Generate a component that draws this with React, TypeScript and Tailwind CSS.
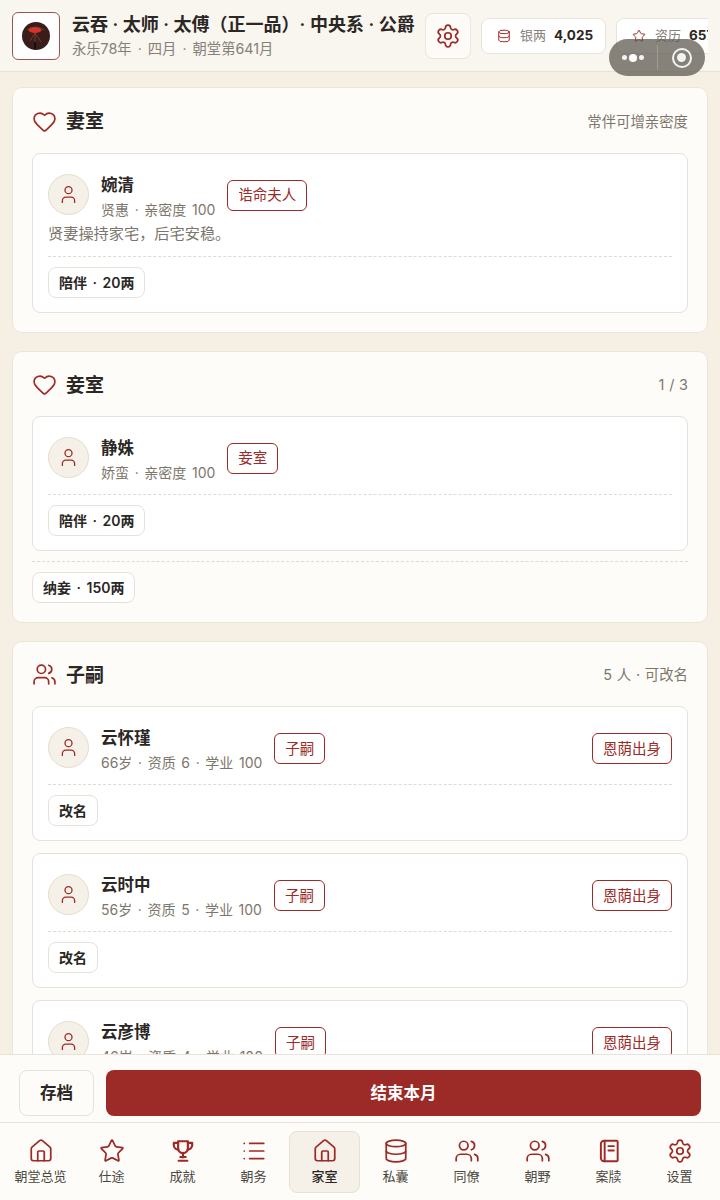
import { Database, Heart, House, List, Settings, Star, User, Users } from 'lucide-react'
import type { ReactNode } from 'react'

const RED = 'text-[#9c2a27]'

type IconProps = { className?: string; size?: number; strokeWidth?: number }

function CupIcon({ className, size = 24 }: IconProps) {
  return (
    <svg className={className} width={size} height={size} viewBox="0 0 24 24" fill="none" stroke="currentColor" strokeWidth="2" strokeLinecap="round" strokeLinejoin="round">
      <path d="M7.5 3h9v6.5a4.5 4.5 0 0 1-9 0z" />
      <path d="M7.5 4.5H3.5v2a4.2 4.2 0 0 0 4.2 4.2M16.5 4.5h4v2a4.2 4.2 0 0 1-4.2 4.2" />
      <path d="M12 14v4M9.5 17.5h5M8 21h8" />
    </svg>
  )
}

function LedgerIcon({ className, size = 24 }: IconProps) {
  return (
    <svg className={className} width={size} height={size} viewBox="0 0 24 24" fill="none" stroke="currentColor" strokeWidth="1.8" strokeLinecap="round" strokeLinejoin="round">
      <path d="M7.5 2.5H19a1 1 0 0 1 1 1v17a1 1 0 0 1-1 1H7.5a3 3 0 0 1-3-3v-13a3 3 0 0 1 3-3z" />
      <path d="M8 2.5v19M11.5 7.5h5M11.5 11.5h5" />
    </svg>
  )
}

const navItems = [
  { label: '朝堂总览', icon: House },
  { label: '仕途', icon: Star },
  { label: '成就', icon: CupIcon },
  { label: '朝务', icon: List },
  { label: '家室', icon: House, active: true },
  { label: '私囊', icon: Database },
  { label: '同僚', icon: Users },
  { label: '朝野', icon: Users },
  { label: '案牍', icon: LedgerIcon },
  { label: '设置', icon: Settings },
]

const children = [
  { name: '云怀瑾', meta: '66岁 · 资质 6 · 学业 100' },
  { name: '云时中', meta: '56岁 · 资质 5 · 学业 100' },
]

function Tag({ children }: { children: ReactNode }) {
  return (
    <span className="mt-[6px] flex h-[31px] shrink-0 items-center rounded-[6px] border border-[#9c2a27] bg-white px-[10px] text-[14.5px] text-[#9c2a27]">
      {children}
    </span>
  )
}

function SmallButton({ children }: { children: ReactNode }) {
  return (
    <button className="flex h-[31px] items-center rounded-[8px] border border-[#e6e2da] bg-white px-[10px] text-[14px] font-semibold text-[#2a2724] [word-spacing:2px]">
      {children}
    </button>
  )
}

function Avatar() {
  return (
    <div className="flex h-[41px] w-[41px] shrink-0 items-center justify-center rounded-full border border-[#e5dccd] bg-[#f6f1e8]">
      <User className={RED} size={21} strokeWidth={1.5} />
    </div>
  )
}

function SectionHeader({ icon, title, note }: { icon: ReactNode; title: string; note: string }) {
  return (
    <div className="mb-[16.2px] flex h-[30px] items-center">
      {icon}
      <h2 className="mt-px ml-[9px] flex-1 text-[19px] leading-none font-semibold text-[#2a2724]">{title}</h2>
      <span className="mt-px text-[14.4px] text-[#7d766c] [word-spacing:0.7px]">{note}</span>
    </div>
  )
}

function Person({ name, meta, tag, extra, desc }: { name: string; meta: string; tag: string; extra?: string; desc?: string }) {
  return (
    <div>
      <div className="flex items-start gap-3">
        <Avatar />
        <div className="flex flex-col">
          <span className="text-[16.5px] leading-[22px] font-semibold text-[#2a2724]">{name}</span>
          <span className="mt-[3px] text-[14px] leading-[22px] text-[#7d766c] [word-spacing:1.7px]">{meta}</span>
        </div>
        <Tag>{tag}</Tag>
        {extra && <div className="ml-auto"><Tag>{extra}</Tag></div>}
      </div>
      {desc && <p className="mt-px text-[15.2px] leading-[24px] text-[#7d766c]">{desc}</p>}
    </div>
  )
}

function PersonCard({ action, ...person }: { action?: string; name: string; meta: string; tag: string; extra?: string; desc?: string }) {
  return (
    <div className="rounded-[8px] border border-[#e6e2da] bg-white px-[15px] pt-[20px] pb-[14px]">
      <Person {...person} />
      {action && (
        <>
          <div className="mt-[10px] mb-[10px] border-t border-dashed border-[#e0dbd2]" />
          <SmallButton>{action}</SmallButton>
        </>
      )}
    </div>
  )
}

export default function App() {
  return (
    <div
      className="relative flex h-[1200px] w-[720px] flex-col overflow-hidden bg-[#f5efe4]"
      style={{ fontFamily: 'Inter, "Noto Sans CJK SC", sans-serif' }}
    >
      <header className="flex h-[72px] shrink-0 items-center border-b border-[#e8e1d5] bg-[#f9f5ef] px-[12px]">
        <div className="flex h-[48px] w-[48px] shrink-0 items-center justify-center rounded-[6px] border border-[#9c5350] bg-white">
          <svg width="30" height="30" viewBox="0 0 30 30">
            <circle cx="15" cy="15" r="14" fill="#3a1c1a" />
            <ellipse cx="14" cy="9" rx="6.5" ry="3" fill="#d8302c" />
            <path d="M6 9q8-6 17 0M14 12v15M9 20l5-8 6 9" stroke="#7b4a2a" strokeWidth="0.8" fill="none" />
            <rect x="13" y="21" width="2" height="7" fill="#111" />
          </svg>
        </div>
        <div className="ml-[12px] w-[344px] shrink-0 overflow-hidden">
          <div className="text-[18px] leading-[24px] font-semibold whitespace-nowrap text-[#2a2724] [text-spacing-trim:space-all]">云吞 · 太师 · 太傅（正一品）· 中央系 · 公爵</div>
          <div className="mt-[2px] text-[14.3px] leading-[20px] whitespace-nowrap text-[#85807a] [word-spacing:2px]">永乐78年 · 四月 · 朝堂第641月</div>
        </div>
        <button className="ml-[9px] flex h-[46px] w-[46px] shrink-0 items-center justify-center rounded-[8px] border border-[#ebe5da] bg-[#fdfbf7]">
          <Settings className={RED} size={26} strokeWidth={1.6} />
        </button>
        <div className="ml-[10px] flex min-w-0 flex-1 gap-[10px] overflow-hidden">
          <div className="flex h-[36px] w-[125px] shrink-0 items-center rounded-[8px] border border-[#e9e4db] bg-white pl-[15px]">
            <Database className={RED} size={14} strokeWidth={1.7} />
            <span className="ml-[9px] text-[13px] text-[#85807a]">银两</span>
            <span className="ml-[8px] text-[13.5px] font-bold text-[#2a2724]">4,025</span>
          </div>
          <div className="flex h-[36px] w-[125px] shrink-0 items-center rounded-[8px] border border-[#e9e4db] bg-white pl-[15px]">
            <Star className={RED} size={14} strokeWidth={1.7} />
            <span className="ml-[9px] text-[13px] text-[#85807a]">资历</span>
            <span className="ml-[8px] text-[13.5px] font-bold text-[#2a2724]">657</span>
          </div>
        </div>
      </header>

      <div className="absolute top-[39px] left-[609px] flex h-[37px] w-[96px] items-center rounded-full bg-[#5f5b52]/75">
        <div className="flex w-[48px] items-center justify-center gap-[2px]">
          <span className="h-[5px] w-[5px] rounded-full bg-white/90" />
          <span className="h-[8px] w-[8px] rounded-full bg-white" />
          <span className="h-[5px] w-[5px] rounded-full bg-white/90" />
        </div>
        <div className="h-[25px] w-px bg-white/20" />
        <div className="flex flex-1 items-center justify-center">
          <span className="flex h-[20px] w-[20px] items-center justify-center rounded-full border-2 border-white/90">
            <span className="h-[9px] w-[9px] rounded-full bg-white/90" />
          </span>
        </div>
      </div>

      <main className="flex min-h-0 flex-1 flex-col gap-[18px] overflow-hidden px-[12px] pt-[15.4px]">
        <section className="shrink-0 rounded-[10px] border border-[#ebe5da] bg-[#fefcf8] px-[19px] pt-[18px] pb-[19px]">
          <SectionHeader icon={<Heart className={RED} size={25} strokeWidth={1.6} />} title="妻室" note="常伴可增亲密度" />
          <PersonCard name="婉清" meta="贤惠 · 亲密度 100" tag="诰命夫人" desc="贤妻操持家宅，后宅安稳。" action="陪伴 · 20两" />
        </section>

        <section className="shrink-0 rounded-[10px] border border-[#ebe5da] bg-[#fefcf8] px-[19px] pt-[18px] pb-[19px]">
          <SectionHeader icon={<Heart className={RED} size={25} strokeWidth={1.6} />} title="妾室" note="1 / 3" />
          <PersonCard name="静姝" meta="娇蛮 · 亲密度 100" tag="妾室" action="陪伴 · 20两" />
          <div className="mt-[10px] mb-[10px] border-t border-dashed border-[#e0dbd2]" />
          <SmallButton>纳妾 · 150两</SmallButton>
        </section>

        <section className="shrink-0 rounded-[10px] border border-[#ebe5da] bg-[#fefcf8] px-[19px] pt-[18px]">
          <SectionHeader icon={<Users className={RED} size={25} strokeWidth={1.6} />} title="子嗣" note="5 人 · 可改名" />
          <div className="flex flex-col gap-[12px]">
            {children.map(c => (
              <PersonCard key={c.name} name={c.name} meta={c.meta} tag="子嗣" extra="恩荫出身" action="改名" />
            ))}
            <PersonCard name="云彦博" meta="46岁 · 资质 4 · 学业 100" tag="子嗣" extra="恩荫出身" />
          </div>
        </section>
      </main>

      <div className="flex h-[69px] shrink-0 items-start gap-[12px] border-t border-b border-[#e8e4dc] bg-[#fefcf8] px-[19px] pt-[15px]">
        <button className="flex h-[46px] w-[75px] shrink-0 items-center justify-center rounded-[8px] border border-[#e6e2da] bg-[#fefcf8] text-[16.5px] font-semibold text-[#2a2724]">存档</button>
        <button className="flex h-[46px] flex-1 items-center justify-center rounded-[8px] bg-[#9c2a27] text-[16.5px] font-semibold text-white">结束本月</button>
      </div>

      <nav className="flex h-[77px] shrink-0 items-start bg-[#fefcf8] px-[5px] pt-[8px]">
        {navItems.map(item => {
          const Icon = item.icon
          return (
            <div
              key={item.label}
              className={`flex h-[62px] w-[71px] flex-col items-center rounded-[8px] border pt-[6px] ${item.active ? 'border-[#e6e0d4] bg-[#f6f1e8]' : 'border-transparent'}`}
            >
              <Icon className={RED} size={26} strokeWidth={1.6} />
              <span className={`mt-[3px] text-[13px] leading-[18px] whitespace-nowrap ${item.active ? 'font-medium text-[#2a2724]' : 'text-[#4a4640]'}`}>{item.label}</span>
            </div>
          )
        })}
      </nav>
    </div>
  )
}
